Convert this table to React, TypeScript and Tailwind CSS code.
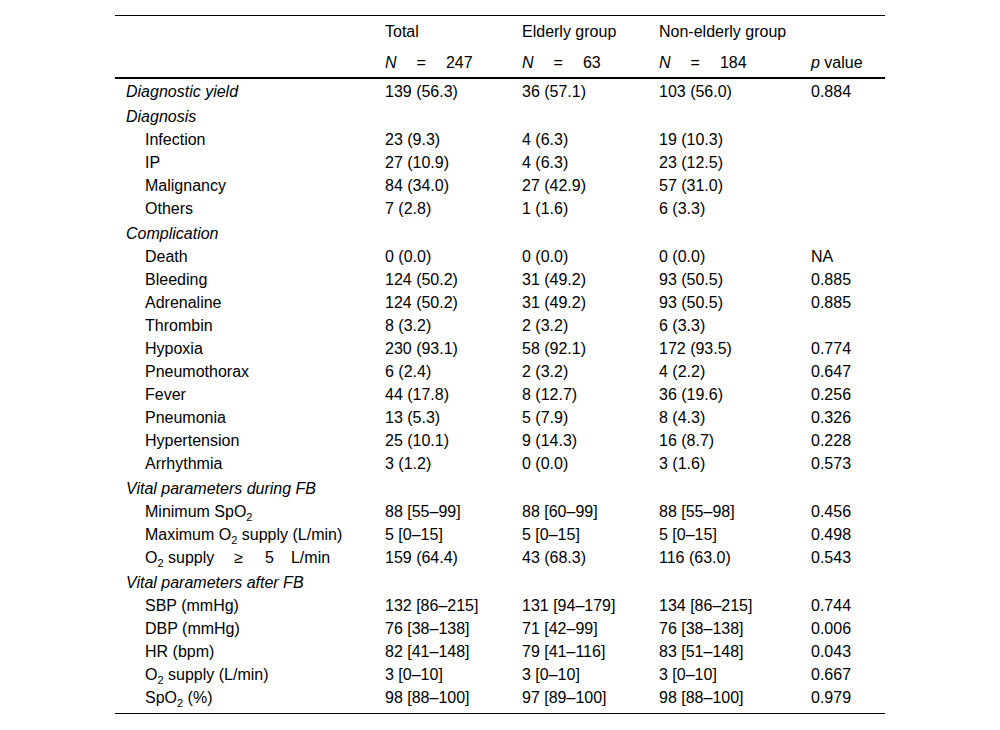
import React from "react";

type Row = { label: React.ReactNode; section?: boolean; first?: boolean; v?: [string, string, string, string] };

const S = ({ children }: { children: React.ReactNode }) => (
  <sub className="text-[11px] leading-none bottom-[-4px]">{children}</sub>
);

const rows: Row[] = [
  { label: "Diagnostic yield", section: true, first: true, v: ["139 (56.3)", "36 (57.1)", "103 (56.0)", "0.884"] },
  { label: "Diagnosis", section: true },
  { label: "Infection", v: ["23 (9.3)", "4 (6.3)", "19 (10.3)", ""] },
  { label: "IP", v: ["27 (10.9)", "4 (6.3)", "23 (12.5)", ""] },
  { label: "Malignancy", v: ["84 (34.0)", "27 (42.9)", "57 (31.0)", ""] },
  { label: "Others", v: ["7 (2.8)", "1 (1.6)", "6 (3.3)", ""] },
  { label: "Complication", section: true },
  { label: "Death", v: ["0 (0.0)", "0 (0.0)", "0 (0.0)", "NA"] },
  { label: "Bleeding", v: ["124 (50.2)", "31 (49.2)", "93 (50.5)", "0.885"] },
  { label: "Adrenaline", v: ["124 (50.2)", "31 (49.2)", "93 (50.5)", "0.885"] },
  { label: "Thrombin", v: ["8 (3.2)", "2 (3.2)", "6 (3.3)", ""] },
  { label: "Hypoxia", v: ["230 (93.1)", "58 (92.1)", "172 (93.5)", "0.774"] },
  { label: "Pneumothorax", v: ["6 (2.4)", "2 (3.2)", "4 (2.2)", "0.647"] },
  { label: "Fever", v: ["44 (17.8)", "8 (12.7)", "36 (19.6)", "0.256"] },
  { label: "Pneumonia", v: ["13 (5.3)", "5 (7.9)", "8 (4.3)", "0.326"] },
  { label: "Hypertension", v: ["25 (10.1)", "9 (14.3)", "16 (8.7)", "0.228"] },
  { label: "Arrhythmia", v: ["3 (1.2)", "0 (0.0)", "3 (1.6)", "0.573"] },
  { label: "Vital parameters during FB", section: true },
  { label: <>Minimum SpO<S>2</S></>, v: ["88 [55–99]", "88 [60–99]", "88 [55–98]", "0.456"] },
  { label: <>Maximum O<S>2</S> supply (L/min)</>, v: ["5 [0–15]", "5 [0–15]", "5 [0–15]", "0.498"] },
  {
    label: (
      <>
        O<S>2</S> supply<span className="inline-block w-[20px]" />≥<span className="inline-block w-[22px]" />5
        <span className="inline-block w-[17px]" />L/min
      </>
    ),
    v: ["159 (64.4)", "43 (68.3)", "116 (63.0)", "0.543"],
  },
  { label: "Vital parameters after FB", section: true },
  { label: "SBP (mmHg)", v: ["132 [86–215]", "131 [94–179]", "134 [86–215]", "0.744"] },
  { label: "DBP (mmHg)", v: ["76 [38–138]", "71 [42–99]", "76 [38–138]", "0.006"] },
  { label: "HR (bpm)", v: ["82 [41–148]", "79 [41–116]", "83 [51–148]", "0.043"] },
  { label: <>O<S>2</S> supply (L/min)</>, v: ["3 [0–10]", "3 [0–10]", "3 [0–10]", "0.667"] },
  { label: <>SpO<S>2</S> (%)</>, v: ["98 [88–100]", "97 [89–100]", "98 [88–100]", "0.979"] },
];

const grid = "grid grid-cols-[259px_137px_137px_152px_85px]";

const NEq = ({ n }: { n: string }) => (
  <span className="whitespace-nowrap">
    <i>N</i>
    <span className="inline-block pl-[20px] pr-[20px]">=</span>
    {n}
  </span>
);

export default function App() {
  return (
    <div
      className="w-[1000px] h-[730px] bg-white text-black text-[16px]"
      style={{ fontFamily: '"Liberation Sans", Arial, sans-serif' }}
    >
      <div className="w-[770px] ml-[115px] pt-[15px]">
        <div className="border-t border-black">
          <div className={`${grid} h-[31px] items-center`}>
            <div />
            <div className="pl-[11px]">Total</div>
            <div className="pl-[11px]">Elderly group</div>
            <div className="pl-[11px]">Non-elderly group</div>
            <div />
          </div>
          <div className={`${grid} h-[30px] pt-[2px] items-center`}>
            <div />
            <div className="pl-[11px]"><NEq n="247" /></div>
            <div className="pl-[11px]"><NEq n="63" /></div>
            <div className="pl-[11px]"><NEq n="184" /></div>
            <div className="pl-[11px]"><i>p</i> value</div>
          </div>
        </div>
        <div className="border-t-2 border-b border-black pb-[5px]">
          {rows.map((r, i) => (
            <div
              key={i}
              className={`${grid} h-[23px] pt-[2px] items-center leading-none ${r.section && !r.first ? "mt-[2px]" : ""}`}
            >
              <div className={r.section ? "pl-[11px] italic whitespace-nowrap" : "pl-[30px] whitespace-nowrap"}>
                {r.label}
              </div>
              {r.v ? (
                r.v.map((c, j) => (
                  <div key={j} className="pl-[11px] whitespace-nowrap">
                    {c}
                  </div>
                ))
              ) : (
                <>
                  <div />
                  <div />
                  <div />
                  <div />
                </>
              )}
            </div>
          ))}
        </div>
      </div>
    </div>
  );
}
